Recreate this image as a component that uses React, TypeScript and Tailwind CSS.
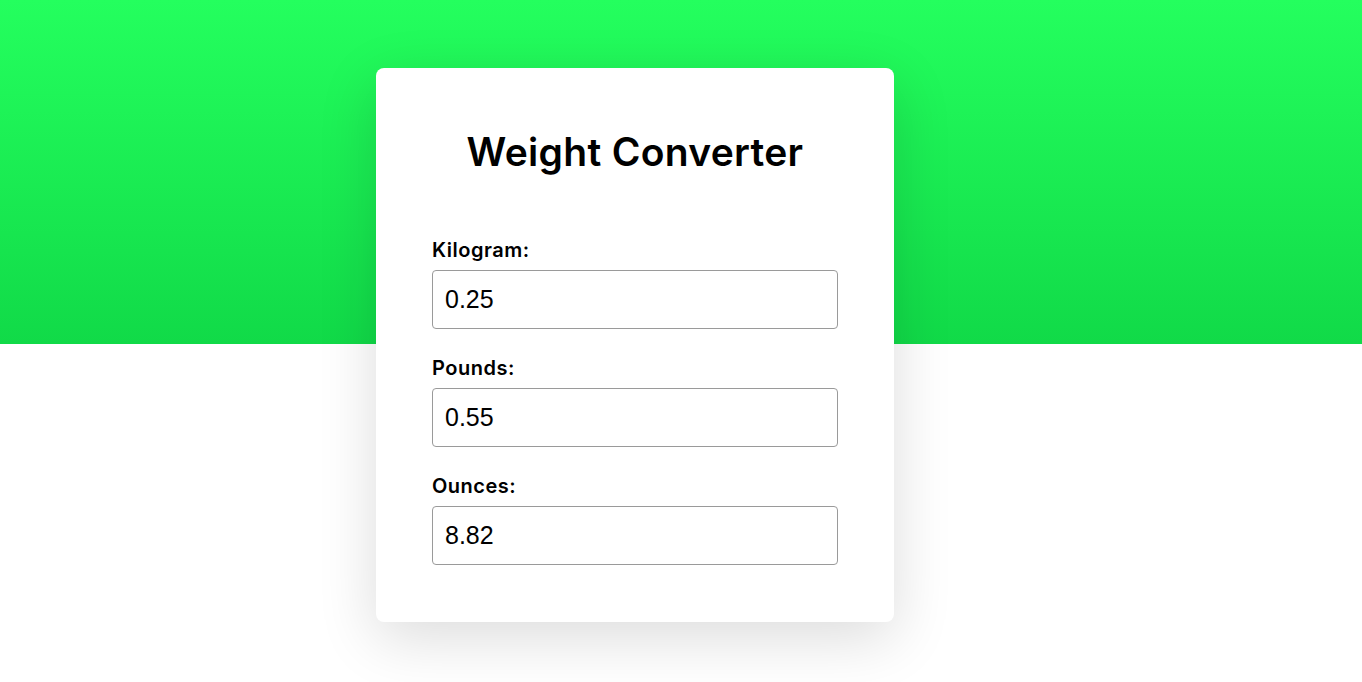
export default function App() {
  const fields = [
    { label: "Kilogram:", value: "0.25" },
    { label: "Pounds:", value: "0.55" },
    { label: "Ounces:", value: "8.82" },
  ];
  return (
    <div className="min-h-[682px] w-full bg-[linear-gradient(to_bottom,#24ff5e_0px,#11da48_344px,#ffffff_344px)] pt-[68px] font-['Inter',sans-serif]">
      <div className="ml-[376px] w-[518px] rounded-lg bg-white px-14 pt-[60px] pb-[57px] shadow-[0_16px_60px_rgba(0,0,0,0.14)]">
        <h1 className="text-center text-[39px] leading-[48px] font-semibold tracking-[0.3px] text-black">
          Weight Converter
        </h1>
        <div className="mt-[60px] flex flex-col gap-[25px]">
          {fields.map((f) => (
            <div key={f.label} className="flex flex-col">
              <label className="text-[20px] leading-[28px] font-semibold tracking-[0.5px] text-black">
                {f.label}
              </label>
              <input
                readOnly
                value={f.value}
                className="mt-[6px] h-[59px] w-full rounded border border-[#9a9a9a] px-3 font-['Liberation_Sans',Arial,sans-serif] text-[25px] text-black outline-none"
              />
            </div>
          ))}
        </div>
      </div>
    </div>
  );
}
